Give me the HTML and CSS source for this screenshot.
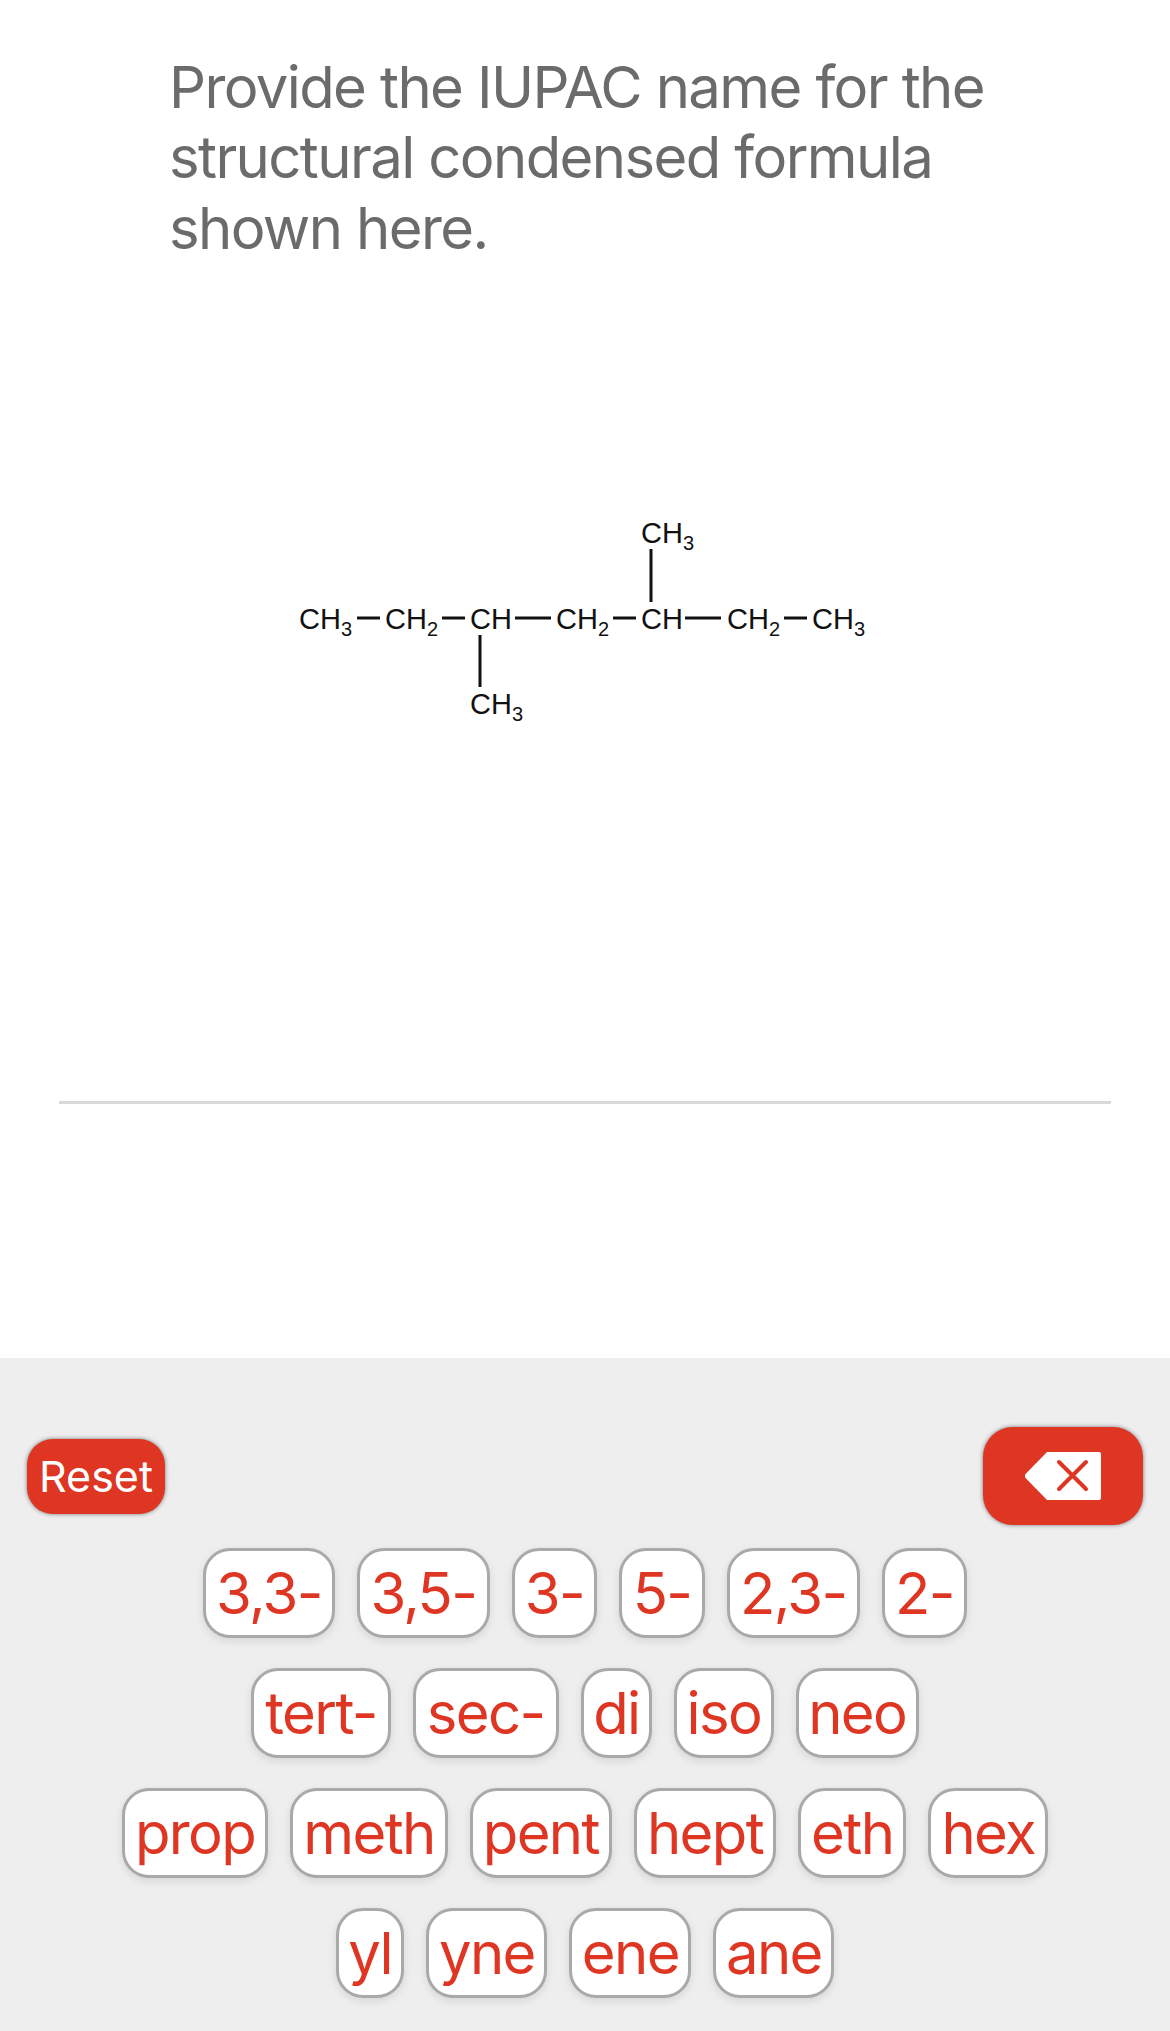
FILE: index.html
```html
<!DOCTYPE html>
<html lang="en">
<head>
    <meta charset="UTF-8">
    <meta name="viewport" content="width=device-width, initial-scale=1.0">
    <title>IUPAC name</title>
    <link rel="stylesheet" href="styles.css">
</head>
<body>
    <main class="question">
        <h1 class="prompt">Provide the IUPAC name for the structural condensed formula shown here.</h1>
        <svg class="formula" width="620" height="240" viewBox="270 510 620 240">
            <g class="atoms">
                <text x="641" y="543">CH<tspan class="sub" dy="7">3</tspan></text>
                <text x="299" y="629">CH<tspan class="sub" dy="7">3</tspan></text>
                <text x="385" y="629">CH<tspan class="sub" dy="7">2</tspan></text>
                <text x="470" y="629">CH</text>
                <text x="556" y="629">CH<tspan class="sub" dy="7">2</tspan></text>
                <text x="641" y="629">CH</text>
                <text x="727" y="629">CH<tspan class="sub" dy="7">2</tspan></text>
                <text x="812" y="629">CH<tspan class="sub" dy="7">3</tspan></text>
                <text x="470" y="714">CH<tspan class="sub" dy="7">3</tspan></text>
            </g>
            <g class="bonds">
                <line x1="357" y1="618" x2="380" y2="618"/>
                <line x1="442" y1="618" x2="465" y2="618"/>
                <line x1="515" y1="618" x2="551" y2="618"/>
                <line x1="613" y1="618" x2="636" y2="618"/>
                <line x1="685" y1="618" x2="721" y2="618"/>
                <line x1="784" y1="618" x2="807" y2="618"/>
                <line x1="651" y1="549" x2="651" y2="602"/>
                <line x1="480" y1="635" x2="480" y2="687"/>
            </g>
        </svg>
        <div class="answer-line"></div>
    </main>

    <section class="keyboard">
        <div class="actions">
            <button class="reset">Reset</button>
            <button class="backspace" aria-label="Backspace">
                <svg width="76" height="48" viewBox="0 0 76 48">
                    <path class="key-body" d="M22 0H74a2 2 0 0 1 2 2V46a2 2 0 0 1-2 2H22L1 26.500a3.500 3.500 0 0 1 0-5Z"/>
                    <path class="key-cross" d="M34 10L61 37M61 10L34 37"/>
                </svg>
            </button>
        </div>
        <div class="tiles">
            <div class="tile-row">
                <button class="tile dash">3,3-</button>
                <button class="tile dash">3,5-</button>
                <button class="tile dash">3-</button>
                <button class="tile dash">5-</button>
                <button class="tile dash">2,3-</button>
                <button class="tile dash">2-</button>
            </div>
            <div class="tile-row">
                <button class="tile long">tert-</button>
                <button class="tile long">sec-</button>
                <button class="tile">di</button>
                <button class="tile">iso</button>
                <button class="tile">neo</button>
            </div>
            <div class="tile-row">
                <button class="tile root">prop</button>
                <button class="tile root">meth</button>
                <button class="tile root">pent</button>
                <button class="tile root">hept</button>
                <button class="tile root">eth</button>
                <button class="tile root">hex</button>
            </div>
            <div class="tile-row">
                <button class="tile">yl</button>
                <button class="tile">yne</button>
                <button class="tile">ene</button>
                <button class="tile">ane</button>
            </div>
        </div>
    </section>
</body>
</html>
```

FILE: styles.css
```css
body {
    margin: 0;
    width: 1170px;
    height: 2031px;
    overflow: hidden;
    background: #fff;
    font-family: 'Inter', 'Liberation Sans', sans-serif;
}
.question {
    height: 1358px;
    display: flex;
    flex-direction: column;
}
.prompt {
    margin: 0;
    padding: 51.5px 170px 0 169px;
    font-size: 58px;
    font-weight: 400;
    line-height: 70.5px;
    letter-spacing: -1.6px;
    color: #6b6b6b;
}
.formula {
    display: block;
    margin: 247px 0 0 270px;
}
.atoms {
    font-family: 'Liberation Sans', sans-serif;
    font-size: 29px;
    fill: #111;
}
.sub {
    font-size: 20px;
}
.bonds {
    stroke: #111;
    stroke-width: 3;
}
.answer-line {
    height: 3px;
    margin: 351px 59px 0 59px;
    background: #d9d9d9;
}
.keyboard {
    height: 673px;
    background: #eee;
}
.actions {
    display: flex;
    justify-content: space-between;
    align-items: center;
    height: 98px;
    padding: 69px 27px 0 27px;
}
button {
    font-family: inherit;
    box-sizing: border-box;
    margin: 0;
    cursor: pointer;
}
.reset {
    width: 138px;
    height: 75px;
    padding: 0;
    border: none;
    border-radius: 26px;
    background: #de3623;
    color: #fff;
    font-size: 43px;
    box-shadow: 0 0 4px rgba(0, 0, 0, 0.5);
}
.backspace {
    display: flex;
    justify-content: center;
    align-items: center;
    width: 160px;
    height: 98px;
    padding: 0;
    border: none;
    border-radius: 30px;
    background: #de3623;
    box-shadow: 0 0 4px rgba(0, 0, 0, 0.5);
}
.key-body {
    fill: #fff;
}
.key-cross {
    fill: none;
    stroke: #de3623;
    stroke-width: 4;
    stroke-linecap: round;
}
.tiles {
    display: flex;
    flex-direction: column;
    gap: 30px;
    margin-top: 23px;
}
.tile-row {
    display: flex;
    justify-content: center;
    gap: 22px;
}
.tile {
    height: 90px;
    padding: 0 9.5px;
    border: 3px solid #a9a9a9;
    border-radius: 27px;
    background: #fff;
    color: #de3623;
    font-size: 58px;
    line-height: 1;
    letter-spacing: -1.6px;
    box-shadow: 0 3px 8px rgba(0, 0, 0, 0.1);
}
.tile.root {
    padding: 0 10px;
}
.tile.dash {
    padding: 0 10.25px;
}
.tile.long {
    padding: 0 11px;
}
```
